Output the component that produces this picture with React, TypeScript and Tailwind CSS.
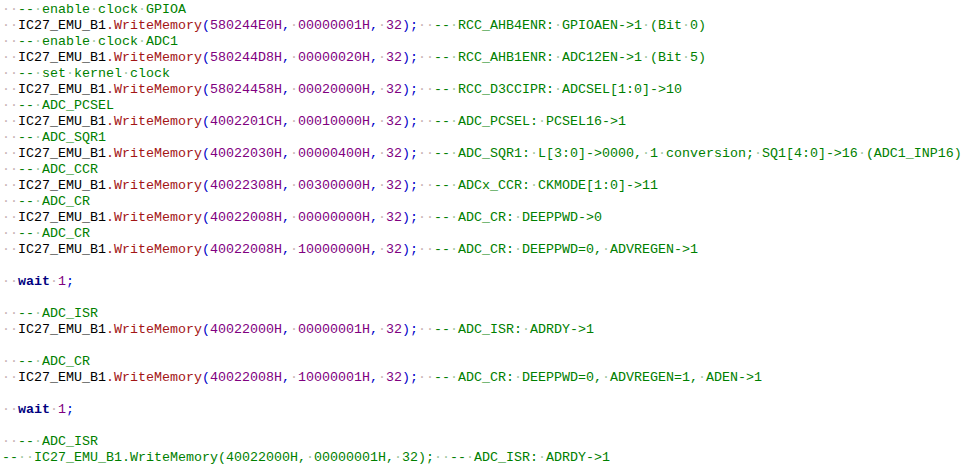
import React from "react";

const LINES: string[] = [
  "  -- enable clock GPIOA",
  "  IC27_EMU_B1.WriteMemory(580244E0H, 00000001H, 32);  -- RCC_AHB4ENR: GPIOAEN->1 (Bit 0)",
  "  -- enable clock ADC1",
  "  IC27_EMU_B1.WriteMemory(580244D8H, 00000020H, 32);  -- RCC_AHB1ENR: ADC12EN->1 (Bit 5)",
  "  -- set kernel clock",
  "  IC27_EMU_B1.WriteMemory(58024458H, 00020000H, 32);  -- RCC_D3CCIPR: ADCSEL[1:0]->10",
  "  -- ADC_PCSEL",
  "  IC27_EMU_B1.WriteMemory(4002201CH, 00010000H, 32);  -- ADC_PCSEL: PCSEL16->1",
  "  -- ADC_SQR1",
  "  IC27_EMU_B1.WriteMemory(40022030H, 00000400H, 32);  -- ADC_SQR1: L[3:0]->0000, 1 conversion; SQ1[4:0]->16 (ADC1_INP16)",
  "  -- ADC_CCR",
  "  IC27_EMU_B1.WriteMemory(40022308H, 00300000H, 32);  -- ADCx_CCR: CKMODE[1:0]->11",
  "  -- ADC_CR",
  "  IC27_EMU_B1.WriteMemory(40022008H, 00000000H, 32);  -- ADC_CR: DEEPPWD->0",
  "  -- ADC_CR",
  "  IC27_EMU_B1.WriteMemory(40022008H, 10000000H, 32);  -- ADC_CR: DEEPPWD=0, ADVREGEN->1",
  "",
  "  wait 1;",
  "",
  "  -- ADC_ISR",
  "  IC27_EMU_B1.WriteMemory(40022000H, 00000001H, 32);  -- ADC_ISR: ADRDY->1",
  "",
  "  -- ADC_CR",
  "  IC27_EMU_B1.WriteMemory(40022008H, 10000001H, 32);  -- ADC_CR: DEEPPWD=0, ADVREGEN=1, ADEN->1",
  "",
  "  wait 1;",
  "",
  "  -- ADC_ISR",
  "--  IC27_EMU_B1.WriteMemory(40022000H, 00000001H, 32);  -- ADC_ISR: ADRDY->1",
];

function dots(n: number) {
  return "\u00b7".repeat(n);
}

function renderCode(code: string, keyBase: string): React.ReactNode[] {
  const out: React.ReactNode[] = [];
  const re = /(\s+)|(\.?[A-Za-z_][A-Za-z0-9_]*)|([0-9][0-9A-Fa-f]*H?)|([(),;])|(.)/g;
  let m: RegExpExecArray | null;
  let k = 0;
  while ((m = re.exec(code)) !== null) {
    const key = keyBase + "-" + k++;
    if (m[1]) {
      out.push(
        <span key={key} className="text-[#c9b3b3]">
          {dots(m[1].length)}
        </span>
      );
    } else if (m[2]) {
      const t = m[2];
      if (t.startsWith(".")) {
        out.push(
          <span key={key} className="text-[#a31515]">
            {t}
          </span>
        );
      } else if (t === "wait") {
        out.push(
          <span key={key} className="font-bold text-[#000080]">
            {t}
          </span>
        );
      } else {
        out.push(
          <span key={key} className="text-black">
            {t}
          </span>
        );
      }
    } else if (m[3]) {
      out.push(
        <span key={key} className="text-[#800080]">
          {m[3]}
        </span>
      );
    } else if (m[4]) {
      out.push(
        <span key={key} className="text-[#0000c8]">
          {m[4]}
        </span>
      );
    } else {
      out.push(
        <span key={key} className="text-black">
          {m[5]}
        </span>
      );
    }
  }
  return out;
}

function renderComment(comment: string, keyBase: string): React.ReactNode[] {
  const parts = comment.split(/(\s+)/).filter((p) => p.length > 0);
  return parts.map((p, i) =>
    /^\s+$/.test(p) ? (
      <span key={keyBase + "c" + i} className="text-[#9cc79c]">
        {dots(p.length)}
      </span>
    ) : (
      <span key={keyBase + "c" + i} className="text-[#008000]">
        {p}
      </span>
    )
  );
}

function Line({ text, idx }: { text: string; idx: number }) {
  const ci = text.indexOf("--");
  const code = ci >= 0 ? text.slice(0, ci) : text;
  const comment = ci >= 0 ? text.slice(ci) : "";
  return (
    <div className="h-4 whitespace-pre">
      {renderCode(code, "l" + idx)}
      {renderComment(comment, "l" + idx)}
    </div>
  );
}

export default function App() {
  return (
    <div className="w-[962px] h-[472px] overflow-hidden bg-white pl-[2px] pt-[2px] font-['Liberation_Mono','Courier_New',monospace] text-[13.333px] leading-4">
      {LINES.map((l, i) => (
        <Line key={i} text={l} idx={i} />
      ))}
    </div>
  );
}
